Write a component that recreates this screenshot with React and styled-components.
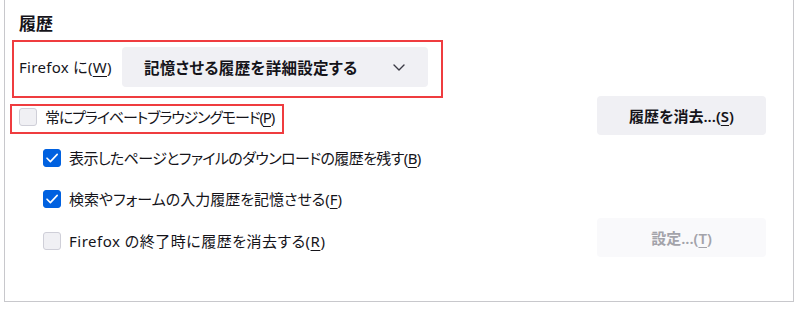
import React from "react";
import styled, { createGlobalStyle } from "styled-components";

const Global = createGlobalStyle`
  html, body { margin: 0; padding: 0; background: #ffffff; }
  body {
    font-family: "Noto Sans", "Noto Sans CJK JP", sans-serif;
    color: #15141a;
    font-feature-settings: "palt" 1;
  }
  u { text-underline-offset: 3px; text-decoration-thickness: 1px; }
`;

const Frame = styled.div`
  box-sizing: border-box;
  margin-left: 4px;
  width: 790px;
  height: 302px;
  border: 1px solid #c8c8cc;
  border-top: none;
  display: flex;
  flex-direction: column;
  padding: 12px 27px 0 7px;
`;

const Heading = styled.h2`
  margin: 0 0 4px 7px;
  height: 24px;
  line-height: 24px;
  font-size: 17px;
  font-weight: 700;
`;

const Highlight = styled.div`
  box-sizing: border-box;
  border: 2px solid #ef3c3f;
  display: flex;
  align-items: center;
  margin-left: ${(p) => p.$left || 0}px;
  margin-top: ${(p) => p.$top || 0}px;
  width: ${(p) => p.$width}px;
  height: ${(p) => p.$height}px;
  padding: ${(p) => p.$pad};
`;

const Label = styled.span`
  font-size: 15px;
  line-height: 20px;
  white-space: nowrap;
  letter-spacing: ${(p) => p.$spacing || 0}px;
`;

const Select = styled.div`
  box-sizing: border-box;
  margin-left: auto;
  width: 306px;
  height: 40px;
  border-radius: 4px;
  background: #f0f0f4;
  display: flex;
  align-items: center;
  padding: 0 23px 0 22px;
  font-size: 15.5px;
  font-weight: 600;
  letter-spacing: 0.3px;
`;

const SelectText = styled.span`
  flex: 1;
  white-space: nowrap;
`;

const Row = styled.div`
  display: flex;
  align-items: flex-start;
  justify-content: space-between;
  margin-top: ${(p) => p.$top || 0}px;
  height: ${(p) => p.$height}px;
`;

const CheckLine = styled.label`
  display: flex;
  align-items: center;
  gap: 8px;
  height: 24px;
  margin-left: ${(p) => p.$indent || 0}px;
  margin-top: ${(p) => p.$top || 0}px;
`;

const Box = styled.span`
  box-sizing: border-box;
  width: 18px;
  height: 18px;
  border-radius: 3px;
  flex: none;
  display: flex;
  align-items: center;
  justify-content: center;
  background: ${(p) => (p.$checked ? "#0061e0" : "#f0f0f4")};
  border: 1px solid ${(p) => (p.$checked ? "#0061e0" : "#cfcfd8")};
`;

const Button = styled.div`
  box-sizing: border-box;
  width: 169px;
  height: 39px;
  border-radius: 4px;
  display: flex;
  align-items: center;
  justify-content: center;
  font-size: 15px;
  font-weight: 600;
  background: ${(p) => (p.$disabled ? "#f9f9fb" : "#f0f0f4")};
  color: ${(p) => (p.$disabled ? "#a3a3aa" : "#15141a")};
  white-space: nowrap;
`;

const Chevron = () => (
  <svg width="12" height="7" viewBox="0 0 12 7" fill="none">
    <path d="M1 1l5 5 5-5" stroke="#3a3944" strokeWidth="1.4" strokeLinecap="round" strokeLinejoin="round" />
  </svg>
);

const Check = ({ checked }) => (
  <Box $checked={checked}>
    {checked && (
      <svg width="14" height="14" viewBox="0 0 14 14" fill="none">
        <path d="M2 7.2l3.4 3.4L12.2 3.4" stroke="#fff" strokeWidth="1.6" strokeLinecap="round" strokeLinejoin="round" />
      </svg>
    )}
  </Box>
);

export default function App() {
  return (
    <>
      <Global />
      <Frame>
        <Heading>履歴</Heading>
        <Highlight $width={431} $height={58} $pad="5px 13px 9px 5px">
          <Label $spacing={0.3}>
            Firefox に(<u>W</u>)
          </Label>
          <Select>
            <SelectText>記憶させる履歴を詳細設定する</SelectText>
            <Chevron />
          </Select>
        </Highlight>
        <Row $top={-2} $height={39}>
          <Highlight $left={-2} $top={8} $width={274} $height={30} $pad="0 0 4px 7px">
            <CheckLine>
              <Check />
              <Label $spacing={-1.1}>
                常にプライベートブラウジングモード(<u>P</u>)
              </Label>
            </CheckLine>
          </Highlight>
          <Button>
            履歴を消去...(<u>S</u>)
          </Button>
        </Row>
        <CheckLine $indent={31} $top={11}>
          <Check checked />
          <Label $spacing={-0.6}>
            表示したページとファイルのダウンロードの履歴を残す(<u>B</u>)
          </Label>
        </CheckLine>
        <CheckLine $indent={31} $top={17}>
          <Check checked />
          <Label>
            検索やフォームの入力履歴を記憶させる(<u>F</u>)
          </Label>
        </CheckLine>
        <Row $top={7} $height={39}>
          <CheckLine $indent={31} $top={11}>
            <Check />
            <Label $spacing={0.5}>
              Firefox の終了時に履歴を消去する(<u>R</u>)
            </Label>
          </CheckLine>
          <Button $disabled>
            設定...(<u>T</u>)
          </Button>
        </Row>
      </Frame>
    </>
  );
}
